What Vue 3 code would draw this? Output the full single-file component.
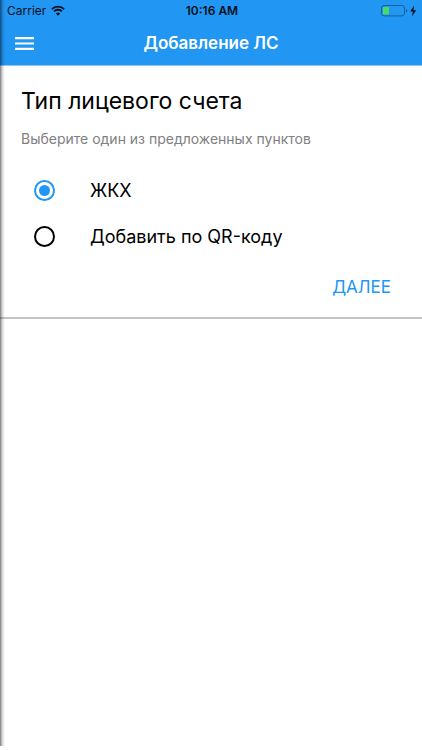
<template>
    <div class="screen">
        <header class="top">
            <div class="status-bar">
                <div class="carrier">
                    <span>Carrier</span>
                    <svg class="wifi" viewBox="0 0 14 11" width="14" height="11" aria-hidden="true">
                        <path d="M0.9 4.1a8.7 8.7 0 0 1 12.2 0M3.1 6.4a5.5 5.5 0 0 1 7.8 0" fill="none" stroke="currentColor" stroke-width="1.9" />
                        <path d="M7 10.8L4.8 8.5a3.2 3.2 0 0 1 4.4 0z" fill="currentColor" />
                    </svg>
                </div>
                <span class="time">10:16 AM</span>
                <div class="battery">
                    <svg viewBox="0 0 36 12" width="36" height="12" aria-hidden="true">
                        <rect x="0.5" y="0.5" width="23" height="10.4" rx="2.6" fill="none" stroke="#12619f" />
                        <rect x="2" y="2" width="6" height="7.4" rx="1" fill="#4cd964" />
                        <path d="M25 4v3.6q1.4-.5 1.4-1.8T25 4z" fill="#12619f" />
                        <path d="M33 0.6L29.3 6.6h2.6L31 11.2l4.2-6h-2.8z" fill="#04101c" />
                    </svg>
                </div>
            </div>
            <div class="nav-bar">
                <button class="menu-button" type="button" aria-label="Меню" @click="menuOpen = !menuOpen" :aria-expanded="menuOpen">
                    <svg viewBox="0 0 19 13" width="19" height="13" aria-hidden="true">
                        <path d="M0 1.2h19M0 6.5h19M0 11.8h19" stroke="#fff" stroke-width="2.2" />
                    </svg>
                </button>
                <h1 class="title">Добавление ЛС</h1>
            </div>
        </header>

        <main>
            <form class="card" @submit.prevent>
                <h2 class="card-title">Тип лицевого счета</h2>
                <p class="hint">Выберите один из предложенных пунктов</p>
                <div class="options">
                    <label v-for="option in options" :key="option.value" class="option">
                        <input type="radio" name="account" :value="option.value" v-model="selected">
                        <span>{{ option.label }}</span>
                    </label>
                </div>
                <div class="actions">
                    <button class="next-button" type="submit">ДАЛЕЕ</button>
                </div>
            </form>
        </main>
        <div class="edge-shadow"></div>
    </div>
</template>

<script setup>
    import { ref } from 'vue';

    const options = [
        { value: 'gkh', label: 'ЖКХ' },
        { value: 'qr', label: 'Добавить по QR-коду' }
    ];

    const selected = ref('gkh');
    const menuOpen = ref(false);
</script>

<style>
    body {
        background-color: white;
    }
</style>

<style scoped>
    .screen {
        position: relative;
        min-height: 100vh;
        background-color: white;
        color: black;
        font-family: Inter, "Liberation Sans", sans-serif;
    }

    .top {
        background-color: #2196f3;
        border-bottom: 1px solid #8fc8f7;
    }

    .status-bar {
        display: grid;
        grid-template-columns: 1fr auto 1fr;
        align-items: center;
        height: 21px;
        padding: 0 5px 0 7px;
        color: #04101c;
        font-size: 12px;
    }

    .carrier {
        display: flex;
        align-items: center;
        gap: 5px;
    }

    .time {
        font-weight: 600;
    }

    .battery {
        display: flex;
        justify-content: flex-end;
    }

    .nav-bar {
        display: grid;
        grid-template-columns: 48px 1fr 48px;
        align-items: center;
        height: 44px;
    }

    .menu-button {
        display: flex;
        align-items: center;
        justify-content: center;
        height: 44px;
        padding: 0;
        border: none;
        background: none;
        cursor: pointer;
    }

    .title {
        margin: 0;
        color: white;
        font-size: 17px;
        font-weight: 600;
        line-height: 20px;
        text-align: center;
    }

    .card {
        padding: 19px 21px 10px;
        border-bottom: 2px solid #c4c4c4;
    }

    .card-title {
        margin: 0;
        font-size: 23px;
        font-weight: 400;
        line-height: 32px;
    }

    .hint {
        margin: 12px 0 0;
        color: #808080;
        font-size: 14px;
        line-height: 20px;
    }

    .options {
        margin-top: 18px;
    }

    .option {
        display: flex;
        align-items: center;
        gap: 35px;
        height: 46px;
        padding-left: 13px;
        font-size: 18px;
        cursor: pointer;
    }

    input {
        appearance: none;
        display: grid;
        place-content: center;
        flex: none;
        width: 21px;
        height: 21px;
        margin: 0;
        border: 2px solid black;
        border-radius: 50%;
    }

    input:checked {
        border-color: #2196f3;
    }

    input:checked::before {
        content: "";
        width: 11px;
        height: 11px;
        border-radius: 50%;
        background-color: #2196f3;
    }

    .actions {
        display: flex;
        justify-content: flex-end;
        margin-top: 8px;
    }

    .next-button {
        padding: 8px 10px;
        border: none;
        background: none;
        color: #2196f3;
        font-family: inherit;
        font-size: 17px;
        line-height: 24px;
        cursor: pointer;
    }

    .edge-shadow {
        position: absolute;
        top: 0;
        bottom: 4px;
        left: 0;
        width: 5px;
        background: linear-gradient(to right, rgba(0, 0, 0, 0.5), rgba(0, 0, 0, 0.14) 50%, transparent);
        pointer-events: none;
    }
</style>
